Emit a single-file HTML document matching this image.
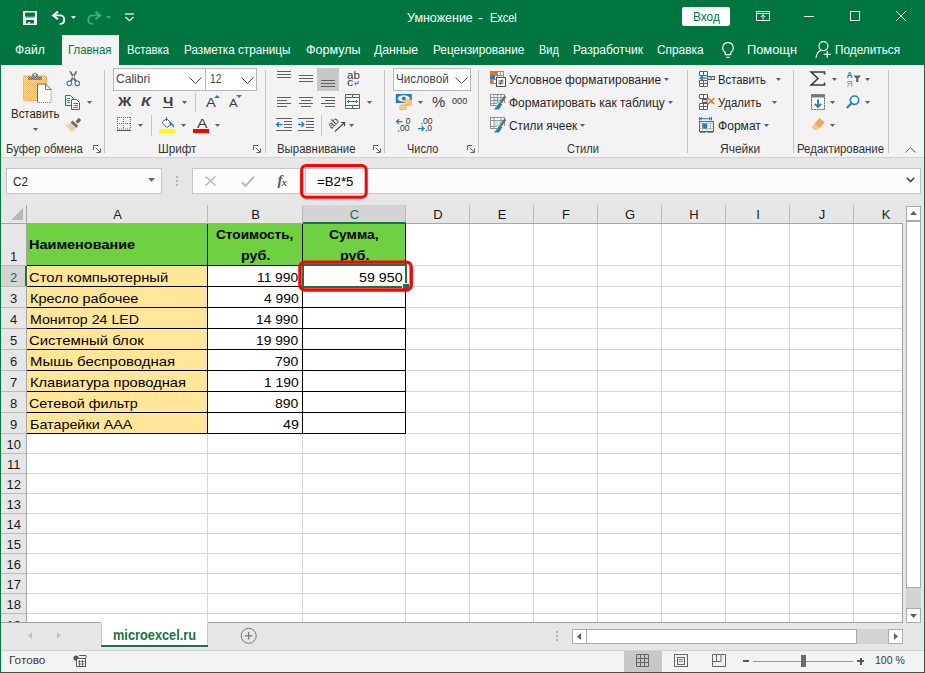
<!DOCTYPE html>
<html><head><meta charset="utf-8"><title>Excel</title>
<style>
*{box-sizing:border-box;margin:0;padding:0}
html,body{width:925px;height:673px;overflow:hidden;background:#f3f3f3}
body{font-family:"Liberation Sans",sans-serif;font-size:12px;color:#262626;position:relative}
.abs{position:absolute}
svg{overflow:visible}
.t{position:absolute;white-space:nowrap;line-height:1}
.sep{position:absolute;width:1px;background:#c6c6c6}
.gl{position:absolute;background:#d6d6d6}
.cell{position:absolute;white-space:nowrap;font-size:15px;line-height:21px;color:#000}
</style></head><body>

<div class="abs" style="left:0px;top:0px;width:925px;height:65px;background:#017540;"></div>
<svg class="abs" style="left:23px;top:11px" width="14" height="14" viewBox="0 0 14 14"><rect x="0" y="0" width="14" height="14" fill="#fff"/><rect x="2" y="1.5" width="10" height="4" fill="#017540"/><path d="M2 5.5H12L11 6.5H3Z" fill="#017540"/><rect x="3" y="9" width="8" height="3.5" fill="#017540"/><rect x="5" y="11" width="2" height="1.5" fill="#fff"/></svg>
<svg class="abs" style="left:51px;top:11px" width="16" height="14" viewBox="0 0 16 14"><path d="M2 4.4H9.6A4.3 4.3 0 0 1 9.6 12.9H8.6" fill="none" stroke="#fff" stroke-width="1.9"/><path d="M7 0.6L2.2 4.4L7 8.2" fill="none" stroke="#fff" stroke-width="2.1"/></svg>
<svg class="abs" style="left:71px;top:16px" width="5" height="3" viewBox="0 0 5 3"><path d="M0 0H5L2.5 3Z" fill="#fff"/></svg>
<svg class="abs" style="left:86px;top:11px" width="16" height="14" viewBox="0 0 16 14"><path d="M14 4.4H6A4.3 4.3 0 0 0 6 12.9H7" fill="none" stroke="#2eb083" stroke-width="1.9"/><path d="M9.5 0.6L14.2 4.4L9.5 8.2" fill="none" stroke="#2eb083" stroke-width="2.1"/></svg>
<svg class="abs" style="left:106px;top:16px" width="5" height="3" viewBox="0 0 5 3"><path d="M0 0H5L2.5 3Z" fill="#2eb083"/></svg>
<svg class="abs" style="left:124.5px;top:13px" width="9" height="8" viewBox="0 0 9 8"><path d="M0 1H9" stroke="#fff" stroke-width="1.2"/><path d="M0.5 4L4.5 7.7L8.5 4" fill="none" stroke="#fff" stroke-width="1.1"/></svg>
<div class="t" style="left:406.60px;top:11.84px;font-size:12px;color:#fff;transform:scaleX(1.0411);transform-origin:0 0;">Умножение</div>
<div class="t" style="left:478.20px;top:11.84px;font-size:12px;color:#fff;transform:scaleX(1.2012);transform-origin:0 0;">-</div>
<div class="t" style="left:489.60px;top:11.84px;font-size:12px;color:#fff;transform:scaleX(0.9133);transform-origin:0 0;">Excel</div>
<div class="abs" style="left:682px;top:7px;width:48px;height:19px;background:#fff;border-radius:2px"></div>
<div class="t" style="left:693.10px;top:10.84px;font-size:12px;color:#017540;transform:scaleX(0.9872);transform-origin:0 0;">Вход</div>
<svg class="abs" style="left:756px;top:11px" width="14" height="10" viewBox="0 0 14 10"><path d="M0.5 0.5H13.5V9.5H0.5Z M0.5 2.5H13.5" fill="none" stroke="#fff" stroke-width="1"/><path d="M7 8.5V4 M4.8 6L7 3.8L9.2 6" fill="none" stroke="#fff" stroke-width="1"/></svg>
<div class="abs" style="left:804px;top:16px;width:10px;height:1px;background:#fff;"></div>
<svg class="abs" style="left:850px;top:11px" width="10" height="10" viewBox="0 0 10 10"><path d="M0.5 0.5H9.5V9.5H0.5Z" fill="none" stroke="#fff" stroke-width="1"/></svg>
<svg class="abs" style="left:896px;top:11px" width="10" height="10" viewBox="0 0 10 10"><path d="M0 0L10 10M10 0L0 10" fill="none" stroke="#fff" stroke-width="1"/></svg>
<div class="abs" style="left:62px;top:35px;width:57px;height:31px;background:#f3f3f3;"></div>
<div class="t" style="left:15.30px;top:43.92px;font-size:12.5px;color:#fff;transform:scaleX(0.9665);transform-origin:0 0;">Файл</div>
<div class="t" style="left:68.00px;top:43.92px;font-size:12.5px;color:#017540;transform:scaleX(0.9122);transform-origin:0 0;">Главная</div>
<div class="t" style="left:126.90px;top:43.92px;font-size:12.5px;color:#fff;transform:scaleX(0.9062);transform-origin:0 0;">Вставка</div>
<div class="t" style="left:184.20px;top:43.92px;font-size:12.5px;color:#fff;transform:scaleX(0.9383);transform-origin:0 0;">Разметка страницы</div>
<div class="t" style="left:305.60px;top:43.92px;font-size:12.5px;color:#fff;transform:scaleX(1.0020);transform-origin:0 0;">Формулы</div>
<div class="t" style="left:374.30px;top:43.92px;font-size:12.5px;color:#fff;transform:scaleX(0.9766);transform-origin:0 0;">Данные</div>
<div class="t" style="left:433.00px;top:43.92px;font-size:12.5px;color:#fff;transform:scaleX(0.9460);transform-origin:0 0;">Рецензирование</div>
<div class="t" style="left:539.20px;top:43.92px;font-size:12.5px;color:#fff;transform:scaleX(0.8800);transform-origin:0 0;">Вид</div>
<div class="t" style="left:573.40px;top:43.92px;font-size:12.5px;color:#fff;transform:scaleX(0.9590);transform-origin:0 0;">Разработчик</div>
<div class="t" style="left:656.90px;top:43.92px;font-size:12.5px;color:#fff;transform:scaleX(0.9483);transform-origin:0 0;">Справка</div>
<div class="t" style="left:746.80px;top:43.92px;font-size:12.5px;color:#fff;transform:scaleX(1.0274);transform-origin:0 0;">Помощн</div>
<div class="t" style="left:835.00px;top:43.92px;font-size:12.5px;color:#fff;transform:scaleX(0.9432);transform-origin:0 0;">Поделиться</div>
<svg class="abs" style="left:721.5px;top:41.5px" width="12" height="17" viewBox="0 0 12 17"><path d="M6 0.6A5.2 5.2 0 0 1 8.8 10.2V12.6H3.2V10.2A5.2 5.2 0 0 1 6 0.6Z" fill="none" stroke="#fff" stroke-width="1.15"/><path d="M4.2 15.4H7.8" stroke="#fff" stroke-width="1.15"/></svg>
<svg class="abs" style="left:815px;top:41px" width="17" height="17" viewBox="0 0 17 17"><circle cx="8.4" cy="5.1" r="4.5" fill="none" stroke="#fff" stroke-width="1.15"/><path d="M1 16.8C1.5 12.5 3.8 10.3 6 9.3" fill="none" stroke="#fff" stroke-width="1.15"/><path d="M12.2 9.8V16.8M8.7 13.3H15.8" stroke="#fff" stroke-width="1.2"/></svg>
<div class="abs" style="left:1px;top:65px;width:923px;height:93px;background:#f3f3f3;border-bottom:1px solid #d2d2d2"></div>
<div class="sep" style="left:104px;top:70px;height:83px"></div>
<div class="sep" style="left:265px;top:70px;height:83px"></div>
<div class="sep" style="left:384px;top:70px;height:83px"></div>
<div class="sep" style="left:478px;top:70px;height:83px"></div>
<div class="sep" style="left:687px;top:70px;height:83px"></div>
<div class="sep" style="left:793px;top:70px;height:83px"></div>
<div class="sep" style="left:888px;top:70px;height:83px"></div>
<div class="t" style="left:5.90px;top:143.14px;font-size:12px;color:#333;transform:scaleX(0.9419);transform-origin:0 0;">Буфер обмена</div>
<div class="t" style="left:157.60px;top:143.14px;font-size:12px;color:#333;transform:scaleX(0.9726);transform-origin:0 0;">Шрифт</div>
<div class="t" style="left:277.20px;top:143.14px;font-size:12px;color:#333;transform:scaleX(0.9516);transform-origin:0 0;">Выравнивание</div>
<div class="t" style="left:407.20px;top:143.14px;font-size:12px;color:#333;transform:scaleX(0.9098);transform-origin:0 0;">Число</div>
<div class="t" style="left:567.20px;top:143.14px;font-size:12px;color:#333;transform:scaleX(0.9228);transform-origin:0 0;">Стили</div>
<div class="t" style="left:719.60px;top:143.14px;font-size:12px;color:#333;transform:scaleX(1.0013);transform-origin:0 0;">Ячейки</div>
<div class="t" style="left:797.40px;top:143.14px;font-size:12px;color:#333;transform:scaleX(0.9528);transform-origin:0 0;">Редактирование</div>
<svg class="abs" style="left:93px;top:145px" width="8" height="8" viewBox="0 0 8 8"><path d="M0.5 5V0.5H5" fill="none" stroke="#5e5e5e" stroke-width="1"/><path d="M2.5 2.5L7 7M7.5 3.5V7.5H3.5" fill="none" stroke="#5e5e5e" stroke-width="1"/></svg>
<svg class="abs" style="left:253px;top:145px" width="8" height="8" viewBox="0 0 8 8"><path d="M0.5 5V0.5H5" fill="none" stroke="#5e5e5e" stroke-width="1"/><path d="M2.5 2.5L7 7M7.5 3.5V7.5H3.5" fill="none" stroke="#5e5e5e" stroke-width="1"/></svg>
<svg class="abs" style="left:373px;top:145px" width="8" height="8" viewBox="0 0 8 8"><path d="M0.5 5V0.5H5" fill="none" stroke="#5e5e5e" stroke-width="1"/><path d="M2.5 2.5L7 7M7.5 3.5V7.5H3.5" fill="none" stroke="#5e5e5e" stroke-width="1"/></svg>
<svg class="abs" style="left:467px;top:145px" width="8" height="8" viewBox="0 0 8 8"><path d="M0.5 5V0.5H5" fill="none" stroke="#5e5e5e" stroke-width="1"/><path d="M2.5 2.5L7 7M7.5 3.5V7.5H3.5" fill="none" stroke="#5e5e5e" stroke-width="1"/></svg>
<svg class="abs" style="left:905px;top:147px" width="11" height="6" viewBox="0 0 11 6"><path d="M0.5 5.5L5.5 0.7L10.5 5.5" fill="none" stroke="#5e5e5e" stroke-width="1"/></svg>
<svg width="0" height="0" style="position:absolute"><defs><pattern id="dth" width="2" height="2" patternUnits="userSpaceOnUse"><rect width="2" height="2" fill="#f7b75f"/><rect width="1" height="1" fill="#fce3bd"/><rect x="1" y="1" width="1" height="1" fill="#fce3bd"/></pattern><pattern id="dtg" width="2" height="2" patternUnits="userSpaceOnUse"><rect width="2" height="2" fill="#6a6a6a"/><rect width="1" height="1" fill="#a8a8a8"/><rect x="1" y="1" width="1" height="1" fill="#a8a8a8"/></pattern></defs></svg>
<svg class="abs" style="left:23px;top:72px" width="29" height="31" viewBox="0 0 29 31"><rect x="0" y="3.5" width="24" height="25.5" rx="2" fill="#f7b75f"/><rect x="1" y="5" width="22" height="23" fill="url(#dth)"/>
<path d="M5 8V4.5H9V2.5Q12 -0.8 15 2.5V4.5H19V8Z" fill="url(#dtg)"/><circle cx="12" cy="2.8" r="1" fill="#f3f3f3"/>
<path d="M14.5 12H22.5L28 17.5V30.5H14.5Z" fill="#fff"/>
<path d="M14.5 30.5V12H22.5L28 17.5" fill="none" stroke="#666" stroke-width="1"/><path d="M28 17.5V30.5H14.5" fill="none" stroke="#777" stroke-width="1" stroke-dasharray="1 1"/>
<path d="M22.5 12V17.5H28" fill="none" stroke="#777" stroke-width="1"/></svg>
<div class="t" style="left:10.90px;top:108.04px;font-size:12px;color:#262626;transform:scaleX(0.9535);transform-origin:0 0;">Вставить</div>
<svg class="abs" style="left:33px;top:128px" width="5" height="3" viewBox="0 0 5 3"><path d="M0 0H5L2.5 3Z" fill="#5e5e5e"/></svg>
<svg class="abs" style="left:66px;top:71px" width="15" height="16" viewBox="0 0 15 16"><path d="M3.2 0.2L5 0.2L10.9 10L9 11Z M11.4 0.2L9.6 0.2L3.7 10L5.6 11Z" fill="#6a6a6a"/>
<circle cx="3.3" cy="12.3" r="2.3" fill="#fff" stroke="#1e7fc8" stroke-width="1.1"/><circle cx="11.3" cy="12.3" r="2.3" fill="#fff" stroke="#1e7fc8" stroke-width="1.1"/></svg>
<svg class="abs" style="left:65px;top:95px" width="16" height="15" viewBox="0 0 16 15"><path d="M0.5 0.5H5.5L8 3V10.5H0.5Z" fill="#fff" stroke="#5e5e5e"/>
<path d="M6.5 4.5H11.5L14.5 7.5V14.5H6.5Z" fill="#fff" stroke="#5e5e5e"/>
<path d="M2 3.5H5M2 5.5H5M2 7.5H5M8.5 8.5H13M8.5 10.5H13M8.5 12.5H13" stroke="#1e7fc8" stroke-width="1"/></svg>
<svg class="abs" style="left:87px;top:101px" width="5" height="3" viewBox="0 0 5 3"><path d="M0 0H5L2.5 3Z" fill="#5e5e5e"/></svg>
<svg class="abs" style="left:65px;top:117px" width="17" height="15" viewBox="0 0 17 15"><path d="M10.5 4.5L13.8 0.8L16.2 3L13 6.8Z" fill="#6a6a6a"/>
<path d="M7.5 3.5L13.3 8.8L11.3 11L5.5 5.7Z" fill="#707070"/>
<path d="M5 6.2L10.8 11.5L7 14.8L0.5 8.5Z" fill="url(#dth)"/></svg>
<div class="abs" style="left:113px;top:68px;width:93px;height:23px;background:#fff;border:1px solid #b6b6b6"></div>
<div class="abs" style="left:205px;top:68px;width:52px;height:23px;background:#fff;border:1px solid #b6b6b6"></div>
<div class="t" style="left:116.20px;top:73.22px;font-size:12.5px;color:#444;transform:scaleX(0.9655);transform-origin:0 0;">Calibri</div>
<div class="t" style="left:209.80px;top:73.22px;font-size:12.5px;color:#444;transform:scaleX(0.8128);transform-origin:0 0;">12</div>
<svg class="abs" style="left:188.5px;top:77px" width="13" height="7" viewBox="0 0 13 7"><path d="M0.5 0.5L6.5 6.5L12.5 0.5" fill="none" stroke="#444" stroke-width="1"/></svg>
<svg class="abs" style="left:240.5px;top:77px" width="13" height="7" viewBox="0 0 13 7"><path d="M0.5 0.5L6.5 6.5L12.5 0.5" fill="none" stroke="#444" stroke-width="1"/></svg>
<div class="t" style="left:117.50px;top:95.72px;font-size:12.5px;color:#3b3b3b;font-weight:bold;transform:scaleX(1.1773);transform-origin:0 0;">Ж</div>
<div class="t" style="left:140.60px;top:95.72px;font-size:12.5px;color:#444;font-weight:bold;font-style:italic;transform:scaleX(1.2754);transform-origin:0 0;">К</div>
<div class="t" style="left:162.90px;top:95.72px;font-size:12.5px;color:#3b3b3b;font-weight:bold;transform:scaleX(1.1727);transform-origin:0 0;">Ч</div>
<div class="abs" style="left:163px;top:107px;width:10px;height:1px;background:#3b3b3b;"></div>
<svg class="abs" style="left:181.5px;top:101px" width="5" height="3" viewBox="0 0 5 3"><path d="M0 0H5L2.5 3Z" fill="#5e5e5e"/></svg>
<div class="sep" style="left:195px;top:93px;height:19px"></div>
<div class="t" style="left:206.20px;top:96.27px;font-size:13.5px;color:#3b3b3b;transform:scaleX(1.0884);transform-origin:0 0;">A</div>
<svg class="abs" style="left:214px;top:95px" width="6" height="3" viewBox="0 0 6 3"><path d="M0 3H6L3 0Z" fill="#1e7fc8"/></svg>
<div class="t" style="left:228.70px;top:99.07px;font-size:10.2px;color:#3b3b3b;transform:scaleX(1.2642);transform-origin:0 0;">A</div>
<svg class="abs" style="left:235.7px;top:95px" width="6" height="3" viewBox="0 0 6 3"><path d="M0 0H6L3 3Z" fill="#1e7fc8"/></svg>
<svg class="abs" style="left:117px;top:117px" width="14" height="14" viewBox="0 0 14 14"><path d="M0 0.5H14M0 6.5H14M0 12H14" stroke="#6a6a6a" stroke-width="1" stroke-dasharray="1 1" fill="none"/><path d="M0.5 0V12M6.5 0V12M13.5 0V12" stroke="#6a6a6a" stroke-width="1" stroke-dasharray="1 1" fill="none"/><path d="M0 13.5H14" stroke="#555" stroke-width="1"/></svg>
<svg class="abs" style="left:138px;top:124px" width="5" height="3" viewBox="0 0 5 3"><path d="M0 0H5L2.5 3Z" fill="#5e5e5e"/></svg>
<div class="sep" style="left:151px;top:115px;height:21px"></div>
<svg class="abs" style="left:160px;top:117px" width="15" height="11" viewBox="0 0 15 11"><path d="M6.5 1.5L12 7L7 10.5L2 5.5Z" fill="#fff" stroke="#5e5e5e" stroke-width="1"/>
<path d="M6.5 0V4" stroke="#5e5e5e" stroke-width="1"/>
<path d="M12 6C13.5 7 14.5 8.5 14 10.5C13 10.5 12 9.5 12 6Z" fill="#1e7fc8"/><path d="M9 4L12.5 7.5L10 9Z" fill="#1e7fc8"/></svg>
<div class="abs" style="left:159px;top:129px;width:16px;height:4px;background:#ffff00;"></div>
<svg class="abs" style="left:181px;top:124px" width="5" height="3" viewBox="0 0 5 3"><path d="M0 0H5L2.5 3Z" fill="#5e5e5e"/></svg>
<div class="t" style="left:196.60px;top:116.97px;font-size:13.5px;color:#3b3b3b;transform:scaleX(1.1551);transform-origin:0 0;">A</div>
<div class="abs" style="left:193px;top:129px;width:16px;height:4px;background:#ff0000;"></div>
<svg class="abs" style="left:215px;top:124px" width="5" height="3" viewBox="0 0 5 3"><path d="M0 0H5L2.5 3Z" fill="#5e5e5e"/></svg>
<div class="abs" style="left:277px;top:71px;width:14px;height:1px;background:#5e5e5e;"></div>
<div class="abs" style="left:277px;top:74px;width:14px;height:1px;background:#5e5e5e;"></div>
<div class="abs" style="left:277px;top:77px;width:14px;height:1px;background:#5e5e5e;"></div>
<div class="abs" style="left:299px;top:75px;width:14px;height:1px;background:#5e5e5e;"></div>
<div class="abs" style="left:299px;top:78px;width:14px;height:1px;background:#5e5e5e;"></div>
<div class="abs" style="left:299px;top:81px;width:14px;height:1px;background:#5e5e5e;"></div>
<div class="abs" style="left:317px;top:68px;width:22px;height:23px;background:#c8c8c8;"></div>
<div class="abs" style="left:321px;top:80px;width:14px;height:1px;background:#5e5e5e;"></div>
<div class="abs" style="left:321px;top:83px;width:14px;height:1px;background:#5e5e5e;"></div>
<div class="abs" style="left:321px;top:86px;width:14px;height:1px;background:#5e5e5e;"></div>
<div class="t" style="left:346.60px;top:69.71px;font-size:10.5px;color:#3b3b3b;transform:scaleX(1.0959);transform-origin:0 0;">ab</div>
<div class="t" style="left:346.90px;top:76.71px;font-size:10.5px;color:#3b3b3b;transform:scaleX(1.2000);transform-origin:0 0;">c</div>
<svg class="abs" style="left:354px;top:81px" width="5" height="5" viewBox="0 0 5 5"><path d="M4.2 0V2.6H0.8M2.3 1L0.7 2.6L2.3 4.2" fill="none" stroke="#1e7fc8" stroke-width="1"/></svg>
<div class="abs" style="left:277px;top:97px;width:14px;height:1px;background:#5e5e5e;"></div>
<div class="abs" style="left:277px;top:100px;width:10px;height:1px;background:#5e5e5e;"></div>
<div class="abs" style="left:277px;top:103px;width:14px;height:1px;background:#5e5e5e;"></div>
<div class="abs" style="left:277px;top:106px;width:10px;height:1px;background:#5e5e5e;"></div>
<div class="abs" style="left:299.0px;top:97px;width:14px;height:1px;background:#5e5e5e;"></div>
<div class="abs" style="left:301.0px;top:100px;width:10px;height:1px;background:#5e5e5e;"></div>
<div class="abs" style="left:299.0px;top:103px;width:14px;height:1px;background:#5e5e5e;"></div>
<div class="abs" style="left:301.0px;top:106px;width:10px;height:1px;background:#5e5e5e;"></div>
<div class="abs" style="left:321px;top:97px;width:14px;height:1px;background:#5e5e5e;"></div>
<div class="abs" style="left:325px;top:100px;width:10px;height:1px;background:#5e5e5e;"></div>
<div class="abs" style="left:321px;top:103px;width:14px;height:1px;background:#5e5e5e;"></div>
<div class="abs" style="left:325px;top:106px;width:10px;height:1px;background:#5e5e5e;"></div>
<svg class="abs" style="left:345px;top:94px" width="15" height="15" viewBox="0 0 15 15"><path d="M0.5 0.5H14.5V14.5H0.5ZM0.5 3.5H14.5M0.5 11.5H14.5M7.5 0.5V3.5M7.5 11.5V14.5" fill="#fff" stroke="#5e5e5e" stroke-width="1"/><path d="M2.5 7.5H12.5M4 6L2.5 7.5L4 9M11 6L12.5 7.5L11 9" fill="none" stroke="#1e7fc8" stroke-width="1"/></svg>
<svg class="abs" style="left:367px;top:101px" width="5" height="3" viewBox="0 0 5 3"><path d="M0 0H5L2.5 3Z" fill="#5e5e5e"/></svg>
<svg class="abs" style="left:276px;top:118px" width="16" height="13" viewBox="0 0 16 13"><path d="M0 0.5H16M8 3.5H16M8 6.5H16M8 9.5H16M0 12.5H16" stroke="#5e5e5e" stroke-width="1"/><path d="M6.5 6.5H0.8M3 4L0.6 6.5L3 9" fill="none" stroke="#1e7fc8" stroke-width="1.3"/></svg>
<svg class="abs" style="left:298px;top:118px" width="16" height="13" viewBox="0 0 16 13"><path d="M0 0.5H16M8 3.5H16M8 6.5H16M8 9.5H16M0 12.5H16" stroke="#5e5e5e" stroke-width="1"/><path d="M0 6.5H5.8M3.5 4L6 6.5L3.5 9" fill="none" stroke="#1e7fc8" stroke-width="1.3"/></svg>
<div class="sep" style="left:321px;top:115px;height:21px"></div>
<svg class="abs" style="left:329px;top:117px" width="16" height="15" viewBox="0 0 16 15"><g transform="rotate(-45 5 7)"><text x="-0.5" y="9" font-family="Liberation Sans" font-size="10" fill="#3b3b3b">ab</text></g><path d="M6 14.5L15.5 5.5M11.8 5.5H15.6V9.3" fill="none" stroke="#444" stroke-width="1.1"/></svg>
<svg class="abs" style="left:349px;top:124px" width="5" height="3" viewBox="0 0 5 3"><path d="M0 0H5L2.5 3Z" fill="#5e5e5e"/></svg>
<div class="abs" style="left:393px;top:68px;width:78px;height:23px;background:#fff;border:1px solid #b6b6b6"></div>
<div class="t" style="left:395.90px;top:73.22px;font-size:12.5px;color:#444;transform:scaleX(0.9347);transform-origin:0 0;">Числовой</div>
<svg class="abs" style="left:454.5px;top:77px" width="13" height="7" viewBox="0 0 13 7"><path d="M0.5 0.5L6.5 6.5L12.5 0.5" fill="none" stroke="#444" stroke-width="1"/></svg>
<svg class="abs" style="left:395px;top:94px" width="18" height="16" viewBox="0 0 18 16"><rect x="0.8" y="0" width="16" height="9" fill="#1e7fc8"/><ellipse cx="8.8" cy="4.5" rx="6" ry="3.2" fill="#fff"/><circle cx="8.8" cy="4.5" r="2" fill="#1e7fc8"/>
<rect x="9.5" y="5.5" width="7.5" height="6" rx="1.5" fill="#f6b85c"/><path d="M9.5 7.5H17M9.5 9.5H17" stroke="#fbe2b8" stroke-width=".7"/>
<rect x="4.3" y="10.5" width="7.5" height="5.5" rx="1.5" fill="#f6b85c"/><path d="M4.3 12.4H11.8M4.3 14.2H11.8" stroke="#fbe2b8" stroke-width=".7"/></svg>
<svg class="abs" style="left:417.5px;top:101px" width="5" height="3" viewBox="0 0 5 3"><path d="M0 0H5L2.5 3Z" fill="#5e5e5e"/></svg>
<div class="t" style="left:432.10px;top:94.48px;font-size:15.5px;color:#3b3b3b;transform:scaleX(0.9651);transform-origin:0 0;">%</div>
<div class="t" style="left:452.40px;top:96.40px;font-size:9.8px;color:#333;transform:scaleX(0.9359);transform-origin:0 0;">000</div>
<svg class="abs" style="left:396px;top:118px" width="16" height="14" viewBox="0 0 16 14"><path d="M6.6 3.6H0.8M3 1.2L0.6 3.6L3 6" fill="none" stroke="#1e7fc8" stroke-width="1.3"/><text x="9.8" y="5.9" font-family="Liberation Sans" font-size="8.6" fill="#333">0</text><text x="1.6" y="12.9" font-family="Liberation Sans" font-size="8.6" fill="#333">,00</text></svg>
<svg class="abs" style="left:418px;top:118px" width="16" height="14" viewBox="0 0 16 14"><text x="2.5" y="5.9" font-family="Liberation Sans" font-size="8.6" fill="#333">,00</text><path d="M0 10.6H5.8M3.6 8.2L6 10.6L3.6 13" fill="none" stroke="#1e7fc8" stroke-width="1.3"/><text x="6.9" y="12.9" font-family="Liberation Sans" font-size="8.6" fill="#333">,0</text></svg>
<svg class="abs" style="left:490px;top:71px" width="16" height="16" viewBox="0 0 16 16"><rect x="0.5" y="0.5" width="13" height="12" fill="#fff" stroke="#8f8f8f"/><path d="M0.5 4.5H13.5M0.5 8.5H13.5M7.5 0.5V12.5M10.5 0.5V4.5" stroke="#8f8f8f" fill="none"/>
<rect x="0" y="0" width="7" height="4" fill="#e8702a"/><rect x="0" y="4.5" width="5" height="3.5" fill="#1e7fc8"/><rect x="0" y="8.5" width="3.5" height="4" fill="#e8702a"/>
<rect x="6.5" y="6.5" width="9" height="9" fill="#fff" stroke="#4a4a4a"/><path d="M8.5 10H13.5M8.5 12.2H13.5M12.3 8.5L9.8 13.8" stroke="#333" stroke-width=".9"/></svg>
<svg class="abs" style="left:490px;top:94px" width="16" height="16" viewBox="0 0 16 16"><rect x="0.5" y="0.5" width="14" height="11" fill="#fff" stroke="#8f8f8f"/><rect x="4" y="3.5" width="7" height="6" fill="#c9ebe6"/><path d="M0.5 3.5H14.5M0.5 6.5H14.5M0.5 9.5H14.5M4 0.5V11.5M7.5 0.5V11.5M11 0.5V11.5" stroke="#8f8f8f" stroke-width=".9" fill="none"/>
<rect x="7" y="9" width="9" height="7" fill="#f3f3f3"/><path d="M15.3 2.2L10.8 8.8" stroke="#6a6a6a" stroke-width="2.4" fill="none"/><path d="M9.3 8L12.3 10.5L8.8 15.5H3.8L7 12Z" fill="#1e7fc8"/></svg>
<svg class="abs" style="left:490px;top:117px" width="16" height="16" viewBox="0 0 16 16"><rect x="0.5" y="0.5" width="14" height="11" fill="#fff" stroke="#8f8f8f"/><rect x="4" y="3.5" width="7" height="6" fill="#c9ebe6"/><path d="M0.5 3.5H14.5M0.5 9.5H14.5M4 0.5V11.5M11 0.5V11.5" stroke="#8f8f8f" stroke-width=".9" fill="none"/>
<rect x="7" y="9" width="9" height="7" fill="#f3f3f3"/><path d="M15.3 2.2L10.8 8.8" stroke="#6a6a6a" stroke-width="2.4" fill="none"/><path d="M9.3 8L12.3 10.5L8.8 15.5H3.8L7 12Z" fill="#1e7fc8"/></svg>
<div class="t" style="left:509.20px;top:73.72px;font-size:12.5px;color:#262626;transform:scaleX(0.9565);transform-origin:0 0;">Условное форматирование</div>
<svg class="abs" style="left:664px;top:78px" width="5" height="3" viewBox="0 0 5 3"><path d="M0 0H5L2.5 3Z" fill="#5e5e5e"/></svg>
<div class="t" style="left:509.20px;top:96.62px;font-size:12.5px;color:#262626;transform:scaleX(0.9580);transform-origin:0 0;">Форматировать как таблицу</div>
<svg class="abs" style="left:668px;top:101px" width="5" height="3" viewBox="0 0 5 3"><path d="M0 0H5L2.5 3Z" fill="#5e5e5e"/></svg>
<div class="t" style="left:509.20px;top:119.62px;font-size:12.5px;color:#262626;transform:scaleX(0.9441);transform-origin:0 0;">Стили ячеек</div>
<svg class="abs" style="left:580px;top:124px" width="5" height="3" viewBox="0 0 5 3"><path d="M0 0H5L2.5 3Z" fill="#5e5e5e"/></svg>
<svg class="abs" style="left:699px;top:71px" width="16" height="16" viewBox="0 0 16 16"><path d="M0.5 0.5H8.5V4.5H0.5ZM4.5 0.5V4.5M0.5 9.5H8.5V15.5H0.5ZM4.5 9.5V15.5M0.5 12.5H8.5" fill="#fff" stroke="#5e5e5e"/>
<rect x="8.5" y="5.5" width="7" height="3" fill="#bfe8ee" stroke="#5e5e5e"/><path d="M12 5.5V8.5" stroke="#5e5e5e"/><path d="M7.5 7H1.5M4 4.5L1.3 7L4 9.5" fill="none" stroke="#1e7fc8" stroke-width="1.5"/></svg>
<svg class="abs" style="left:699px;top:94px" width="16" height="16" viewBox="0 0 16 16"><path d="M0.5 0.5H8.5V4.5H0.5ZM4.5 0.5V4.5M0.5 9.5H8.5V15.5H0.5ZM4.5 9.5V15.5M0.5 12.5H8.5" fill="#fff" stroke="#5e5e5e"/>
<rect x="3.5" y="5.5" width="4.5" height="3" fill="#bfe8ee" stroke="#5e5e5e"/><path d="M9 4L15.3 10M15.3 4L9 10" stroke="#e8702a" stroke-width="1.5"/></svg>
<svg class="abs" style="left:699px;top:117px" width="16" height="16" viewBox="0 0 16 16"><path d="M0.5 0V3.5M12.5 0V3.5M1 1.7H12M3 0.2L1.2 1.7L3 3.2M10 0.2L11.8 1.7L10 3.2" fill="none" stroke="#1e7fc8" stroke-width="1"/>
<rect x="0.5" y="4.5" width="14" height="10" fill="#fff" stroke="#5e5e5e"/><path d="M0.5 6.5H14.5M0.5 9H14.5M0.5 11.5H14.5M3.5 4.5V14.5M8 4.5V14.5M11.5 4.5V14.5" stroke="#b0b0b0" stroke-width=".8"/><rect x="3.5" y="6.5" width="4.5" height="5" fill="#1e7fc8"/><path d="M1 15.5H6L7.5 14.5L9 15.5H14" fill="none" stroke="#5e5e5e" stroke-width=".8"/></svg>
<div class="t" style="left:718.20px;top:73.72px;font-size:12.5px;color:#262626;transform:scaleX(0.9041);transform-origin:0 0;">Вставить</div>
<svg class="abs" style="left:776px;top:78px" width="5" height="3" viewBox="0 0 5 3"><path d="M0 0H5L2.5 3Z" fill="#5e5e5e"/></svg>
<div class="t" style="left:718.20px;top:96.62px;font-size:12.5px;color:#262626;transform:scaleX(0.9095);transform-origin:0 0;">Удалить</div>
<svg class="abs" style="left:771.5px;top:101px" width="5" height="3" viewBox="0 0 5 3"><path d="M0 0H5L2.5 3Z" fill="#5e5e5e"/></svg>
<div class="t" style="left:718.20px;top:119.62px;font-size:12.5px;color:#262626;transform:scaleX(0.9662);transform-origin:0 0;">Формат</div>
<svg class="abs" style="left:764px;top:124px" width="5" height="3" viewBox="0 0 5 3"><path d="M0 0H5L2.5 3Z" fill="#5e5e5e"/></svg>
<svg class="abs" style="left:810px;top:71px" width="16" height="15" viewBox="0 0 16 15"><path d="M14.5 3.5V1H1.2L8 7.5L1.2 14H14.5V11.5" fill="none" stroke="#3b3b3b" stroke-width="1.6"/></svg>
<svg class="abs" style="left:832px;top:78px" width="5" height="3" viewBox="0 0 5 3"><path d="M0 0H5L2.5 3Z" fill="#5e5e5e"/></svg>
<svg class="abs" style="left:846px;top:70px" width="16" height="17" viewBox="0 0 16 17"><text x="0.5" y="8" font-family="Liberation Sans" font-size="8.5" font-weight="bold" fill="#1e7fc8">A</text><text x="0.5" y="16.5" font-family="Liberation Sans" font-size="8.5" fill="#8a8a8a">Я</text><path d="M7.5 5.5H15L12.3 8.5V12H10.2V8.5Z" fill="#5e5e5e"/></svg>
<svg class="abs" style="left:865px;top:78px" width="5" height="3" viewBox="0 0 5 3"><path d="M0 0H5L2.5 3Z" fill="#5e5e5e"/></svg>
<svg class="abs" style="left:811px;top:94px" width="15" height="16" viewBox="0 0 15 16"><rect x="0.5" y="0.5" width="13" height="15" fill="#fff" stroke="#6a6a6a" stroke-dasharray="2 0.6"/><rect x="0.5" y="0.5" width="13" height="3" fill="#777"/><path d="M7 5.5V13M3.8 9.8L7 13L10.2 9.8" fill="none" stroke="#1e7fc8" stroke-width="1.9"/></svg>
<svg class="abs" style="left:830px;top:101px" width="5" height="3" viewBox="0 0 5 3"><path d="M0 0H5L2.5 3Z" fill="#5e5e5e"/></svg>
<svg class="abs" style="left:846px;top:95px" width="14" height="14" viewBox="0 0 14 14"><circle cx="8.5" cy="5.2" r="4.2" fill="#fff" stroke="#1e7fc8" stroke-width="1.7"/><path d="M5.3 8.5L0.8 13" stroke="#1e7fc8" stroke-width="2"/></svg>
<svg class="abs" style="left:865px;top:101px" width="5" height="3" viewBox="0 0 5 3"><path d="M0 0H5L2.5 3Z" fill="#5e5e5e"/></svg>
<svg class="abs" style="left:811px;top:117px" width="14" height="14" viewBox="0 0 14 14"><path d="M8.5 1L13.5 5.5L6.5 13H3L0.5 10Z" fill="#f7c98a"/><path d="M3.5 6.5L8.5 1L13.5 5.5L8.5 11Z" fill="#f0a85a"/></svg>
<svg class="abs" style="left:830px;top:124px" width="5" height="3" viewBox="0 0 5 3"><path d="M0 0H5L2.5 3Z" fill="#5e5e5e"/></svg>
<div class="abs" style="left:1px;top:158px;width:923px;height:492px;background:#e6e6e6;"></div>
<div class="abs" style="left:6px;top:168px;width:156px;height:26px;background:#fcfcfc;border:1px solid #c6c6c6"></div>
<div class="t" style="left:13.40px;top:174.90px;font-size:13px;color:#262626;transform:scaleX(0.9026);transform-origin:0 0;">C2</div>
<svg class="abs" style="left:148px;top:178px" width="7" height="4" viewBox="0 0 7 4"><path d="M0 0H7L3.5 4Z" fill="#6a6a6a"/></svg>
<div class="abs" style="left:176px;top:176px;width:2px;height:2px;background:#b5b5b5;"></div>
<div class="abs" style="left:176px;top:180px;width:2px;height:2px;background:#b5b5b5;"></div>
<div class="abs" style="left:176px;top:184px;width:2px;height:2px;background:#b5b5b5;"></div>
<div class="abs" style="left:192px;top:168px;width:729px;height:26px;background:#fcfcfc;border:1px solid #c6c6c6"></div>
<div class="abs" style="left:305px;top:169px;width:1px;height:24px;background:#c6c6c6;"></div>
<svg class="abs" style="left:205px;top:176px" width="11" height="10" viewBox="0 0 11 10"><path d="M0.5 0.5L10.5 9.5M10.5 0.5L0.5 9.5" stroke="#b4b4b4" stroke-width="1.4" fill="none"/></svg>
<svg class="abs" style="left:241px;top:176px" width="14" height="11" viewBox="0 0 14 11"><path d="M0.8 6.2L4.6 10L13 0.8" stroke="#bdbdbd" stroke-width="2.2" fill="none"/></svg>
<div class="t" style="left:277.5px;top:173px;font-family:'Liberation Serif',serif;font-style:italic;font-weight:bold;font-size:15px;color:#5a5a5a">f<span style="font-size:11px;position:relative;top:1px;left:-1px">x</span></div>
<div class="t" style="left:317.00px;top:174.70px;font-size:13px;color:#000;transform:scaleX(1.0172);transform-origin:0 0;">=B2*5</div>
<svg class="abs" style="left:906px;top:177px" width="9" height="6" viewBox="0 0 9 6"><path d="M0.8 0.8L4.5 4.5L8.2 0.8" fill="none" stroke="#444" stroke-width="1.6"/></svg>
<svg class="abs" style="left:300px;top:164px" width="68" height="35" viewBox="0 0 68 35"><rect x="1.6" y="1.6" width="64.6" height="31.6" rx="4.5" fill="none" stroke="#fe0000" stroke-width="3"/></svg>
<div class="abs" style="left:27px;top:224px;width:875px;height:398px;background:#fff;"></div>
<div class="abs" style="left:303px;top:205px;width:103px;height:18px;background:#d4d4d4;"></div>
<div class="t" style="left:113.16px;top:207.60px;font-size:13px;color:#1a1a1a;">A</div>
<div class="abs" style="left:207px;top:205px;width:1px;height:18px;background:#b9b9b9;"></div>
<div class="abs" style="left:207px;top:224px;width:1px;height:398px;background:#d6d6d6;"></div>
<div class="t" style="left:251.16px;top:207.60px;font-size:13px;color:#1a1a1a;">B</div>
<div class="abs" style="left:302px;top:205px;width:1px;height:18px;background:#b9b9b9;"></div>
<div class="abs" style="left:302px;top:224px;width:1px;height:398px;background:#d6d6d6;"></div>
<div class="t" style="left:349.81px;top:207.60px;font-size:13px;color:#1e7145;">C</div>
<div class="abs" style="left:405px;top:205px;width:1px;height:18px;background:#b9b9b9;"></div>
<div class="abs" style="left:405px;top:224px;width:1px;height:398px;background:#d6d6d6;"></div>
<div class="t" style="left:433.31px;top:207.60px;font-size:13px;color:#1a1a1a;">D</div>
<div class="abs" style="left:469px;top:205px;width:1px;height:18px;background:#b9b9b9;"></div>
<div class="abs" style="left:469px;top:224px;width:1px;height:398px;background:#d6d6d6;"></div>
<div class="t" style="left:497.66px;top:207.60px;font-size:13px;color:#1a1a1a;">E</div>
<div class="abs" style="left:533px;top:205px;width:1px;height:18px;background:#b9b9b9;"></div>
<div class="abs" style="left:533px;top:224px;width:1px;height:398px;background:#d6d6d6;"></div>
<div class="t" style="left:562.03px;top:207.60px;font-size:13px;color:#1a1a1a;">F</div>
<div class="abs" style="left:597px;top:205px;width:1px;height:18px;background:#b9b9b9;"></div>
<div class="abs" style="left:597px;top:224px;width:1px;height:398px;background:#d6d6d6;"></div>
<div class="t" style="left:624.94px;top:207.60px;font-size:13px;color:#1a1a1a;">G</div>
<div class="abs" style="left:661px;top:205px;width:1px;height:18px;background:#b9b9b9;"></div>
<div class="abs" style="left:661px;top:224px;width:1px;height:398px;background:#d6d6d6;"></div>
<div class="t" style="left:689.31px;top:207.60px;font-size:13px;color:#1a1a1a;">H</div>
<div class="abs" style="left:725px;top:205px;width:1px;height:18px;background:#b9b9b9;"></div>
<div class="abs" style="left:725px;top:224px;width:1px;height:398px;background:#d6d6d6;"></div>
<div class="t" style="left:756.19px;top:207.60px;font-size:13px;color:#1a1a1a;">I</div>
<div class="abs" style="left:789px;top:205px;width:1px;height:18px;background:#b9b9b9;"></div>
<div class="abs" style="left:789px;top:224px;width:1px;height:398px;background:#d6d6d6;"></div>
<div class="t" style="left:818.75px;top:207.60px;font-size:13px;color:#1a1a1a;">J</div>
<div class="abs" style="left:853px;top:205px;width:1px;height:18px;background:#b9b9b9;"></div>
<div class="abs" style="left:853px;top:224px;width:1px;height:398px;background:#d6d6d6;"></div>
<div class="t" style="left:881.66px;top:207.60px;font-size:13px;color:#1a1a1a;">K</div>
<div class="abs" style="left:1px;top:223px;width:902px;height:1px;background:#a6a6a6;"></div>
<div class="abs" style="left:26px;top:205px;width:1px;height:418px;background:#a6a6a6;"></div>
<div class="abs" style="left:303px;top:222px;width:103px;height:2px;background:#1e7145;"></div>
<svg class="abs" style="left:11px;top:208px" width="12" height="12" viewBox="0 0 12 12"><path d="M12 0V12H0Z" fill="#b8b8b8"/></svg>
<div class="abs" style="left:1px;top:266px;width:25px;height:20px;background:#d4d4d4;"></div>
<div class="abs" style="left:25px;top:266px;width:2px;height:20px;background:#1e7145;"></div>
<div class="abs" style="left:1px;top:265px;width:25px;height:1px;background:#b9b9b9;"></div>
<div class="abs" style="left:27px;top:265px;width:875px;height:1px;background:#d6d6d6;"></div>
<div class="abs" style="left:1px;top:286px;width:25px;height:1px;background:#b9b9b9;"></div>
<div class="abs" style="left:27px;top:286px;width:875px;height:1px;background:#d6d6d6;"></div>
<div class="abs" style="left:1px;top:307px;width:25px;height:1px;background:#b9b9b9;"></div>
<div class="abs" style="left:27px;top:307px;width:875px;height:1px;background:#d6d6d6;"></div>
<div class="abs" style="left:1px;top:328px;width:25px;height:1px;background:#b9b9b9;"></div>
<div class="abs" style="left:27px;top:328px;width:875px;height:1px;background:#d6d6d6;"></div>
<div class="abs" style="left:1px;top:349px;width:25px;height:1px;background:#b9b9b9;"></div>
<div class="abs" style="left:27px;top:349px;width:875px;height:1px;background:#d6d6d6;"></div>
<div class="abs" style="left:1px;top:370px;width:25px;height:1px;background:#b9b9b9;"></div>
<div class="abs" style="left:27px;top:370px;width:875px;height:1px;background:#d6d6d6;"></div>
<div class="abs" style="left:1px;top:391px;width:25px;height:1px;background:#b9b9b9;"></div>
<div class="abs" style="left:27px;top:391px;width:875px;height:1px;background:#d6d6d6;"></div>
<div class="abs" style="left:1px;top:412px;width:25px;height:1px;background:#b9b9b9;"></div>
<div class="abs" style="left:27px;top:412px;width:875px;height:1px;background:#d6d6d6;"></div>
<div class="abs" style="left:1px;top:433px;width:25px;height:1px;background:#b9b9b9;"></div>
<div class="abs" style="left:27px;top:433px;width:875px;height:1px;background:#d6d6d6;"></div>
<div class="abs" style="left:1px;top:453px;width:25px;height:1px;background:#b9b9b9;"></div>
<div class="abs" style="left:27px;top:453px;width:875px;height:1px;background:#d6d6d6;"></div>
<div class="abs" style="left:1px;top:473px;width:25px;height:1px;background:#b9b9b9;"></div>
<div class="abs" style="left:27px;top:473px;width:875px;height:1px;background:#d6d6d6;"></div>
<div class="abs" style="left:1px;top:493px;width:25px;height:1px;background:#b9b9b9;"></div>
<div class="abs" style="left:27px;top:493px;width:875px;height:1px;background:#d6d6d6;"></div>
<div class="abs" style="left:1px;top:513px;width:25px;height:1px;background:#b9b9b9;"></div>
<div class="abs" style="left:27px;top:513px;width:875px;height:1px;background:#d6d6d6;"></div>
<div class="abs" style="left:1px;top:533px;width:25px;height:1px;background:#b9b9b9;"></div>
<div class="abs" style="left:27px;top:533px;width:875px;height:1px;background:#d6d6d6;"></div>
<div class="abs" style="left:1px;top:553px;width:25px;height:1px;background:#b9b9b9;"></div>
<div class="abs" style="left:27px;top:553px;width:875px;height:1px;background:#d6d6d6;"></div>
<div class="abs" style="left:1px;top:573px;width:25px;height:1px;background:#b9b9b9;"></div>
<div class="abs" style="left:27px;top:573px;width:875px;height:1px;background:#d6d6d6;"></div>
<div class="abs" style="left:1px;top:593px;width:25px;height:1px;background:#b9b9b9;"></div>
<div class="abs" style="left:27px;top:593px;width:875px;height:1px;background:#d6d6d6;"></div>
<div class="abs" style="left:1px;top:613px;width:25px;height:1px;background:#b9b9b9;"></div>
<div class="abs" style="left:27px;top:613px;width:875px;height:1px;background:#d6d6d6;"></div>
<div class="t" style="left:10.08px;top:249.50px;font-size:13px;color:#1a1a1a;">1</div>
<div class="t" style="left:10.08px;top:270.50px;font-size:13px;color:#1e7145;">2</div>
<div class="t" style="left:10.08px;top:291.50px;font-size:13px;color:#1a1a1a;">3</div>
<div class="t" style="left:10.08px;top:312.50px;font-size:13px;color:#1a1a1a;">4</div>
<div class="t" style="left:10.08px;top:333.50px;font-size:13px;color:#1a1a1a;">5</div>
<div class="t" style="left:10.08px;top:354.50px;font-size:13px;color:#1a1a1a;">6</div>
<div class="t" style="left:10.08px;top:375.50px;font-size:13px;color:#1a1a1a;">7</div>
<div class="t" style="left:10.08px;top:396.50px;font-size:13px;color:#1a1a1a;">8</div>
<div class="t" style="left:10.08px;top:417.50px;font-size:13px;color:#1a1a1a;">9</div>
<div class="t" style="left:6.47px;top:437.50px;font-size:13px;color:#1a1a1a;">10</div>
<div class="t" style="left:6.95px;top:457.50px;font-size:13px;color:#1a1a1a;">11</div>
<div class="t" style="left:6.47px;top:477.50px;font-size:13px;color:#1a1a1a;">12</div>
<div class="t" style="left:6.47px;top:497.50px;font-size:13px;color:#1a1a1a;">13</div>
<div class="t" style="left:6.47px;top:517.50px;font-size:13px;color:#1a1a1a;">14</div>
<div class="t" style="left:6.47px;top:537.50px;font-size:13px;color:#1a1a1a;">15</div>
<div class="t" style="left:6.47px;top:557.50px;font-size:13px;color:#1a1a1a;">16</div>
<div class="t" style="left:6.47px;top:577.50px;font-size:13px;color:#1a1a1a;">17</div>
<div class="t" style="left:6.47px;top:597.50px;font-size:13px;color:#1a1a1a;">18</div>
<div class="abs" style="left:1px;top:614px;width:25px;height:8px;overflow:hidden"><div class="t" style="left:5.5px;top:4.5px;font-size:13px;color:#262626">19</div></div>
<div class="abs" style="left:902px;top:223px;width:1px;height:400px;background:#a0a0a0;"></div>
<div class="abs" style="left:1px;top:622px;width:902px;height:1px;background:#a0a0a0;"></div>
<div class="abs" style="left:27px;top:224px;width:379px;height:41px;background:#6fd040;"></div>
<div class="abs" style="left:27px;top:266px;width:180px;height:20px;background:#ffe699;"></div>
<div class="abs" style="left:27px;top:287px;width:180px;height:20px;background:#ffe699;"></div>
<div class="abs" style="left:27px;top:308px;width:180px;height:20px;background:#ffe699;"></div>
<div class="abs" style="left:27px;top:329px;width:180px;height:20px;background:#ffe699;"></div>
<div class="abs" style="left:27px;top:350px;width:180px;height:20px;background:#ffe699;"></div>
<div class="abs" style="left:27px;top:371px;width:180px;height:20px;background:#ffe699;"></div>
<div class="abs" style="left:27px;top:392px;width:180px;height:20px;background:#ffe699;"></div>
<div class="abs" style="left:27px;top:413px;width:180px;height:20px;background:#ffe699;"></div>
<div class="abs" style="left:207px;top:224px;width:1px;height:210px;background:#000;"></div>
<div class="abs" style="left:302px;top:224px;width:1px;height:210px;background:#000;"></div>
<div class="abs" style="left:405px;top:224px;width:1px;height:210px;background:#000;"></div>
<div class="abs" style="left:27px;top:265px;width:379px;height:1px;background:#000;"></div>
<div class="abs" style="left:27px;top:286px;width:379px;height:1px;background:#000;"></div>
<div class="abs" style="left:27px;top:307px;width:379px;height:1px;background:#000;"></div>
<div class="abs" style="left:27px;top:328px;width:379px;height:1px;background:#000;"></div>
<div class="abs" style="left:27px;top:349px;width:379px;height:1px;background:#000;"></div>
<div class="abs" style="left:27px;top:370px;width:379px;height:1px;background:#000;"></div>
<div class="abs" style="left:27px;top:391px;width:379px;height:1px;background:#000;"></div>
<div class="abs" style="left:27px;top:412px;width:379px;height:1px;background:#000;"></div>
<div class="abs" style="left:27px;top:433px;width:379px;height:1px;background:#000;"></div>
<div class="t" style="left:29.00px;top:270.67px;font-size:13.5px;color:#000;transform:scaleX(1.0928);transform-origin:0 0;">Стол компьютерный</div>
<div class="t" style="left:257.31px;top:270.67px;font-size:13.5px;color:#000;transform:scaleX(1.0199);transform-origin:0 0;">11 990</div>
<div class="t" style="left:29.60px;top:291.67px;font-size:13.5px;color:#000;transform:scaleX(1.0731);transform-origin:0 0;">Кресло рабочее</div>
<div class="t" style="left:263.82px;top:291.67px;font-size:13.5px;color:#000;transform:scaleX(1.0237);transform-origin:0 0;">4 990</div>
<div class="t" style="left:29.60px;top:312.67px;font-size:13.5px;color:#000;transform:scaleX(1.0508);transform-origin:0 0;">Монитор 24 LED</div>
<div class="t" style="left:256.31px;top:312.67px;font-size:13.5px;color:#000;transform:scaleX(1.0194);transform-origin:0 0;">14 990</div>
<div class="t" style="left:29.20px;top:333.67px;font-size:13.5px;color:#000;transform:scaleX(1.1051);transform-origin:0 0;">Системный блок</div>
<div class="t" style="left:256.31px;top:333.67px;font-size:13.5px;color:#000;transform:scaleX(1.0194);transform-origin:0 0;">19 990</div>
<div class="t" style="left:29.60px;top:354.67px;font-size:13.5px;color:#000;transform:scaleX(1.1067);transform-origin:0 0;">Мышь беспроводная</div>
<div class="t" style="left:275.08px;top:354.67px;font-size:13.5px;color:#000;transform:scaleX(1.0355);transform-origin:0 0;">790</div>
<div class="t" style="left:29.60px;top:375.67px;font-size:13.5px;color:#000;transform:scaleX(1.0858);transform-origin:0 0;">Клавиатура проводная</div>
<div class="t" style="left:263.82px;top:375.67px;font-size:13.5px;color:#000;transform:scaleX(1.0237);transform-origin:0 0;">1 190</div>
<div class="t" style="left:29.20px;top:396.67px;font-size:13.5px;color:#000;transform:scaleX(1.0619);transform-origin:0 0;">Сетевой фильтр</div>
<div class="t" style="left:275.08px;top:396.67px;font-size:13.5px;color:#000;transform:scaleX(1.0355);transform-origin:0 0;">890</div>
<div class="t" style="left:29.60px;top:417.67px;font-size:13.5px;color:#000;transform:scaleX(1.0615);transform-origin:0 0;">Батарейки AAA</div>
<div class="t" style="left:282.58px;top:417.67px;font-size:13.5px;color:#000;transform:scaleX(1.0533);transform-origin:0 0;">49</div>
<div class="t" style="left:359.00px;top:270.67px;font-size:13.5px;color:#000;transform:scaleX(1.0560);transform-origin:0 0;">59 950</div>
<div class="t" style="left:29.00px;top:238.07px;font-size:13.5px;color:#000;font-weight:bold;transform:scaleX(1.0713);transform-origin:0 0;">Наименование</div>
<div class="t" style="left:215.80px;top:227.87px;font-size:13.5px;color:#000;font-weight:bold;transform:scaleX(1.0082);transform-origin:0 0;">Стоимость,</div>
<div class="t" style="left:240.50px;top:249.27px;font-size:13.5px;color:#000;font-weight:bold;transform:scaleX(1.0628);transform-origin:0 0;">руб.</div>
<div class="t" style="left:329.20px;top:227.87px;font-size:13.5px;color:#000;font-weight:bold;transform:scaleX(1.0305);transform-origin:0 0;">Сумма,</div>
<div class="t" style="left:339.90px;top:249.27px;font-size:13.5px;color:#000;font-weight:bold;transform:scaleX(1.0628);transform-origin:0 0;">руб.</div>
<div class="abs" style="left:302px;top:264px;width:105px;height:24px;border:2px solid #1e7145"></div>
<div class="abs" style="left:402px;top:283px;width:6px;height:6px;background:#1e7145;border-top:1px solid #fff;border-left:1px solid #fff;width:7px;height:7px"></div>
<svg class="abs" style="left:298px;top:260px" width="115" height="32" viewBox="0 0 115 32"><rect x="2" y="2.1" width="111.2" height="27.9" rx="5" fill="none" stroke="#fe0000" stroke-width="3.4"/></svg>
<div class="abs" style="left:906px;top:206px;width:15px;height:15px;background:#fff;border:1px solid #ababab"></div>
<svg class="abs" style="left:910px;top:211px" width="7" height="4" viewBox="0 0 7 4"><path d="M0 4H7L3.5 0Z" fill="#606060"/></svg>
<div class="abs" style="left:906px;top:221px;width:15px;height:367px;background:#fff;border:1px solid #ababab"></div>
<div class="abs" style="left:906px;top:588px;width:15px;height:20px;background:#d4d4d4;"></div>
<div class="abs" style="left:906px;top:608px;width:15px;height:15px;background:#fff;border:1px solid #ababab"></div>
<svg class="abs" style="left:910px;top:614px" width="7" height="4" viewBox="0 0 7 4"><path d="M0 0H7L3.5 4Z" fill="#606060"/></svg>
<div class="abs" style="left:101px;top:622px;width:107px;height:23px;background:#fff;"></div>
<div class="abs" style="left:101px;top:645px;width:107px;height:2px;background:#1e7145;"></div>
<div class="abs" style="left:101px;top:623px;width:1px;height:22px;background:#c6c6c6;"></div>
<div class="abs" style="left:207px;top:623px;width:1px;height:22px;background:#c6c6c6;"></div>
<div class="t" style="left:112.90px;top:627.75px;font-size:14px;color:#1e7145;font-weight:bold;transform:scaleX(0.9126);transform-origin:0 0;">microexcel.ru</div>
<svg class="abs" style="left:28px;top:632px" width="4" height="7" viewBox="0 0 4 7"><path d="M4 0V7L0 3.5Z" fill="#c0c0c0"/></svg>
<svg class="abs" style="left:57px;top:632px" width="4" height="7" viewBox="0 0 4 7"><path d="M0 0V7L4 3.5Z" fill="#c0c0c0"/></svg>
<svg class="abs" style="left:240px;top:627px" width="18" height="18" viewBox="0 0 18 18"><circle cx="8.7" cy="8.8" r="7.5" fill="none" stroke="#777" stroke-width="1"/><path d="M8.7 5V12.6M4.9 8.8H12.5" stroke="#777" stroke-width="1.2"/></svg>
<div class="abs" style="left:556px;top:631px;width:2px;height:2px;background:#b5b5b5;"></div>
<div class="abs" style="left:556px;top:635px;width:2px;height:2px;background:#b5b5b5;"></div>
<div class="abs" style="left:556px;top:639px;width:2px;height:2px;background:#b5b5b5;"></div>
<div class="abs" style="left:572px;top:629px;width:15px;height:15px;background:#fff;border:1px solid #ababab"></div>
<svg class="abs" style="left:577px;top:633px" width="4" height="7" viewBox="0 0 4 7"><path d="M4 0V7L0 3.5Z" fill="#606060"/></svg>
<div class="abs" style="left:586px;top:629px;width:271px;height:15px;background:#fff;border:1px solid #ababab"></div>
<div class="abs" style="left:857px;top:629px;width:31px;height:15px;background:#d4d4d4;"></div>
<div class="abs" style="left:888px;top:629px;width:15px;height:15px;background:#fff;border:1px solid #ababab"></div>
<svg class="abs" style="left:894px;top:633px" width="4" height="7" viewBox="0 0 4 7"><path d="M0 0V7L4 3.5Z" fill="#606060"/></svg>
<div class="abs" style="left:1px;top:650px;width:923px;height:22px;background:#f3f3f3;"></div>
<div class="abs" style="left:1px;top:650px;width:923px;height:1px;background:#d2d2d2;"></div>
<div class="t" style="left:9.20px;top:655.22px;font-size:11.2px;color:#3a3a3a;transform:scaleX(1.0526);transform-origin:0 0;">Готово</div>
<svg class="abs" style="left:73px;top:655px" width="13" height="12" viewBox="0 0 13 12"><circle cx="3" cy="3" r="2.6" fill="#555"/><rect x="3.5" y="3.5" width="9" height="8" fill="#fff" stroke="#555"/><path d="M6 0.5H13V3" fill="none" stroke="#555"/><path d="M5 6.5H11.5M5 9H11.5M6.5 5V11M9.5 5V11" stroke="#555" stroke-width=".8"/></svg>
<div class="abs" style="left:624px;top:651px;width:38px;height:21px;background:#c8c8c8;"></div>
<svg class="abs" style="left:636px;top:654px" width="13" height="13" viewBox="0 0 13 13"><path d="M0.5 0.5H12.5V12.5H0.5ZM4.5 0.5V12.5M8.5 0.5V12.5M0.5 4.5H12.5M0.5 8.5H12.5" fill="none" stroke="#666" stroke-width="1"/></svg>
<svg class="abs" style="left:674px;top:654px" width="14" height="13" viewBox="0 0 14 13"><rect x="0.5" y="0.5" width="13" height="12" fill="none" stroke="#666"/><rect x="3.5" y="3.5" width="7" height="7" fill="none" stroke="#666"/><path d="M5 5.5H9M5 7.5H9" stroke="#666" stroke-width=".8"/></svg>
<svg class="abs" style="left:712px;top:654px" width="14" height="13" viewBox="0 0 14 13"><path d="M0.5 0.5H13.5V12.5H0.5ZM4.5 0.5V7.5M9 0.5V7.5M0.5 7.5H9" fill="none" stroke="#666"/></svg>
<div class="abs" style="left:743px;top:660px;width:6px;height:2px;background:#555;"></div>
<div class="abs" style="left:753px;top:661px;width:100px;height:1px;background:#9a9a9a;"></div>
<div class="abs" style="left:801px;top:655px;width:5px;height:12px;background:#6a6a6a;"></div>
<div class="abs" style="left:857px;top:660px;width:7px;height:2px;background:#555;"></div>
<div class="abs" style="left:859.5px;top:657.5px;width:2px;height:7px;background:#555;"></div>
<div class="t" style="left:875.40px;top:655.22px;font-size:11.2px;color:#3a3a3a;transform:scaleX(0.9385);transform-origin:0 0;">100 %</div>
<div class="abs" style="left:0px;top:0px;width:1px;height:673px;background:#017540;"></div>
<div class="abs" style="left:924px;top:0px;width:1px;height:673px;background:#017540;"></div>
<div class="abs" style="left:0px;top:672px;width:925px;height:1px;background:#017540;"></div>
</body></html>
